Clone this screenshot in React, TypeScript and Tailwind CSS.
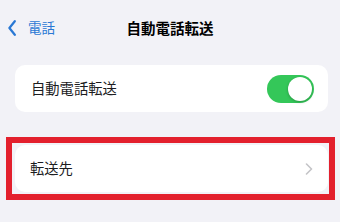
const font = { fontFamily: '"Noto Sans CJK JP", "Noto Sans", sans-serif' };

const Toggle = ({ on }: { on: boolean }) => {
  return (
    <div
      className={`relative w-[47px] h-[28px] rounded-full ${on ? 'bg-[#34c759]' : 'bg-[#e9e9eb]'}`}
    >
      <div
        className={`absolute top-[2px] w-[24px] h-[24px] rounded-full bg-white shadow-[0_1px_3px_rgba(0,0,0,0.25)] ${on ? 'right-[2px]' : 'left-[2px]'}`}
      />
    </div>
  );
};

const App = () => {
  return (
    <div
      className="w-[340px] h-[222px] bg-[#f2f2f7] overflow-hidden text-black"
      style={font}
    >
      <div className="h-[56px] grid grid-cols-[1fr_auto_1fr] items-center">
        <div className="flex items-center pl-[8px] text-[#2a78d4]">
          <svg width="8" height="16" viewBox="0 0 8 16" fill="none">
            <path
              d="M6.8 1.2L1.4 8L6.8 14.8"
              stroke="currentColor"
              strokeWidth="2.2"
              strokeLinecap="round"
              strokeLinejoin="round"
            />
          </svg>
          <span className="ml-[12px] text-[13.5px] leading-none">電話</span>
        </div>
        <div className="text-[14.5px] font-bold leading-none">自動電話転送</div>
        <div />
      </div>

      <div className="mt-[9px] ml-[15px] mr-[12px] h-[47px] rounded-[10px] bg-white flex items-center justify-between pl-[16px] pr-[14px]">
        <span className="text-[14.3px] leading-none text-[#1c1c1e]">自動電話転送</span>
        <Toggle on={true} />
      </div>

      <div className="mt-[25px] ml-[6px] w-[329px] border-[6px] border-[#e3202d] py-[2px] pl-[3px] pr-[1px]">
        <div className="h-[47px] rounded-[10px] bg-white flex items-center justify-between pl-[15px] pr-[15px]">
          <span className="text-[14.3px] leading-none text-[#1c1c1e]">転送先</span>
          <svg width="8" height="12" viewBox="0 0 8 12" fill="none">
            <path
              d="M1.5 1L6.5 6L1.5 11"
              stroke="#c4c4c7"
              strokeWidth="1.6"
              strokeLinecap="round"
              strokeLinejoin="round"
            />
          </svg>
        </div>
      </div>
    </div>
  );
};

export default App;
